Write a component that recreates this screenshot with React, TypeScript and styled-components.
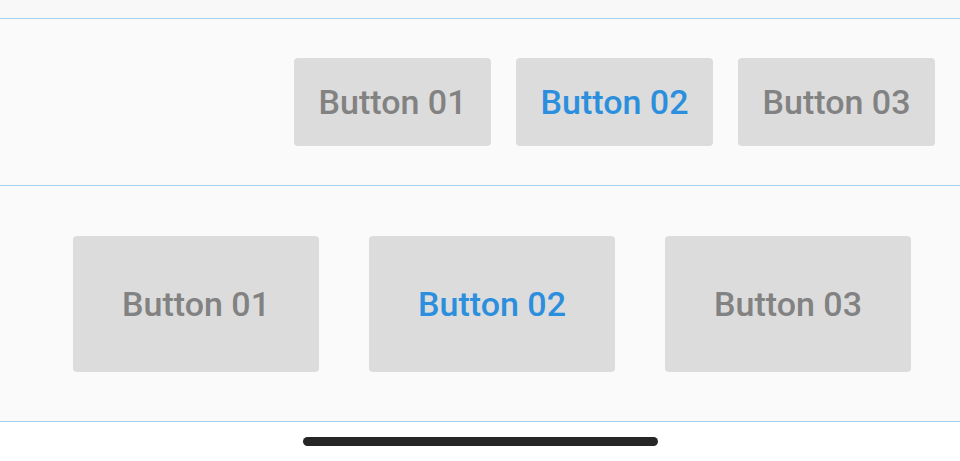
import React from "react";
import styled, { createGlobalStyle } from "styled-components";

const GlobalStyle = createGlobalStyle`
  html, body {
    margin: 0;
    padding: 0;
    background: #ffffff;
    font-family: Roboto, "Liberation Sans", Arial, sans-serif;
  }
`;

const Screen = styled.div`
  width: 960px;
  height: 461px;
  display: flex;
  flex-direction: column;
  overflow: hidden;
`;

const TopStrip = styled.div`
  height: 18px;
  background: #f8f8f8;
  border-bottom: 1px solid #a3d3ec;
`;

const Row = styled.div<{ $height: number; $gap: number; $padRight: number }>`
  height: ${({ $height }) => $height}px;
  background: #fafafa;
  border-bottom: 1px solid #a3d3ec;
  display: flex;
  justify-content: flex-end;
  align-items: center;
  gap: ${({ $gap }) => $gap}px;
  padding-right: ${({ $padRight }) => $padRight}px;
`;

const Button = styled.button<{ $w: number; $h: number; $active?: boolean }>`
  width: ${({ $w }) => $w}px;
  height: ${({ $h }) => $h}px;
  background: #dcdcdc;
  border: none;
  border-radius: 4px;
  padding: 0;
  font-family: Roboto, "Liberation Sans", Arial, sans-serif;
  font-size: 34px;
  font-weight: 500;
  color: ${({ $active }) => ($active ? "#2b8fde" : "#828282")};
  display: flex;
  align-items: center;
  justify-content: center;
  cursor: pointer;
`;

const Bottom = styled.div`
  flex: 1;
  background: #ffffff;
  display: flex;
  justify-content: center;
  padding-top: 15px;
`;

const HomeIndicator = styled.div`
  width: 355px;
  height: 9px;
  border-radius: 5px;
  background: #262626;
`;

const labels = ["Button 01", "Button 02", "Button 03"];

export default function App() {
  return (
    <Screen>
      <GlobalStyle />
      <TopStrip />
      <Row $height={166} $gap={25} $padRight={25}>
        {labels.map((l, i) => (
          <Button key={l} $w={197} $h={88} $active={i === 1}>
            {l}
          </Button>
        ))}
      </Row>
      <Row $height={235} $gap={50} $padRight={49}>
        {labels.map((l, i) => (
          <Button key={l} $w={246} $h={136} $active={i === 1}>
            {l}
          </Button>
        ))}
      </Row>
      <Bottom>
        <HomeIndicator />
      </Bottom>
    </Screen>
  );
}
